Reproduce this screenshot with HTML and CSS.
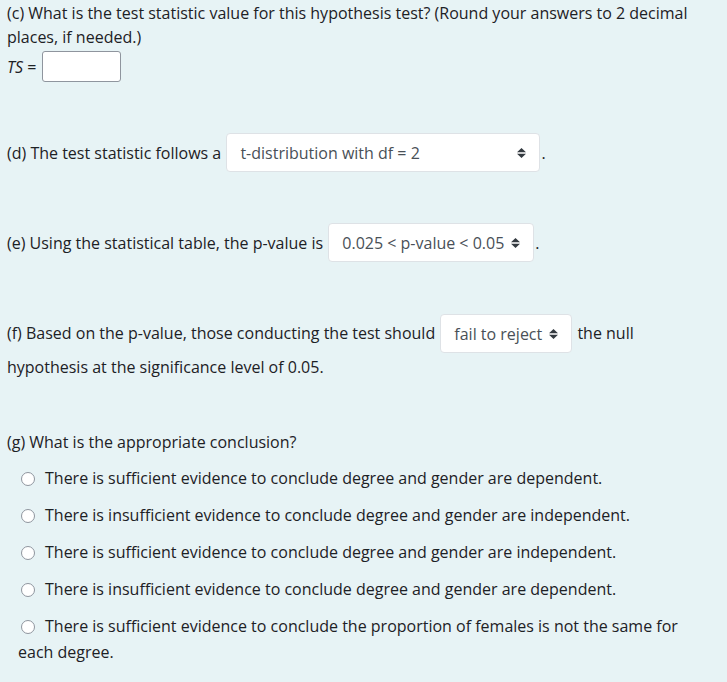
FILE: index.html
```html
<!DOCTYPE html>
<html>
<head>
<meta charset="utf-8">
<link rel="stylesheet" href="styles.css">
</head>
<body>
<div class="q">
  <p class="para">(c) What is the test statistic value for this hypothesis test? (Round your answers to 2 decimal places, if needed.)</p>
  <div class="ts-row"><span><i>TS</i> =</span><span class="input"></span></div>

  <div class="row row-d">(d) The test statistic follows a <span class="sel sel-wide"><span class="sel-text">t-distribution with df = 2</span><svg class="arrow" width="9" height="10" viewBox="0 0 9 10"><path d="M0 4.2L4.5 0L9 4.2Z M0 5.8L4.5 10L9 5.8Z" fill="#343a40"/></svg></span>.</div>

  <div class="row row-e">(e) Using the statistical table, the p-value is <span class="sel"><span class="sel-text">0.025 &lt; p-value &lt; 0.05</span><svg class="arrow" width="9" height="10" viewBox="0 0 9 10"><path d="M0 4.2L4.5 0L9 4.2Z M0 5.8L4.5 10L9 5.8Z" fill="#343a40"/></svg></span>.</div>

  <p class="para row-f">(f) Based on the p-value, those conducting the test should <span class="sel sel-f"><span class="sel-text">fail to reject</span><svg class="arrow" width="9" height="10" viewBox="0 0 9 10"><path d="M0 4.2L4.5 0L9 4.2Z M0 5.8L4.5 10L9 5.8Z" fill="#343a40"/></svg></span> the null hypothesis at the significance level of 0.05.</p>

  <p class="para row-g">(g) What is the appropriate conclusion?</p>
  <div class="options">
    <div class="opt"><span class="radio"></span>There is sufficient evidence to conclude degree and gender are dependent.</div>
    <div class="opt"><span class="radio"></span>There is insufficient evidence to conclude degree and gender are independent.</div>
    <div class="opt"><span class="radio"></span>There is sufficient evidence to conclude degree and gender are independent.</div>
    <div class="opt"><span class="radio"></span>There is insufficient evidence to conclude degree and gender are dependent.</div>
    <div class="opt"><span class="radio"></span>There is sufficient evidence to conclude the proportion of females is not the same for each degree.</div>
  </div>
</div>
</body>
</html>
```
FILE: styles.css
```css
html, body {
  margin: 0;
  background: #e7f3f5;
}
body {
  color: #1d2125;
  font-family: "Open Sans", "Noto Sans", sans-serif;
  font-size: 16px;
  line-height: 24px;
}
.q {
  width: 693px;
  padding: 1px 0 0 7px;
}
.para {
  margin: 0;
}
.ts-row {
  display: flex;
  align-items: center;
  gap: 6px;
  margin-top: 2px;
}
.input {
  display: block;
  width: 77px;
  height: 29px;
  border: 1px solid #8f959e;
  border-radius: 3px;
  background: #fff;
}
.row {
  display: flex;
  align-items: center;
  white-space: pre;
}
.row-d { margin-top: 51px; }
.row-e { margin-top: 51px; }
.sel {
  display: inline-flex;
  align-items: center;
  justify-content: space-between;
  box-sizing: border-box;
  height: 39px;
  padding: 0 13px 0 13px;
  margin: 0 1px 0 1px;
  border: 1px solid #dee2e6;
  border-radius: 4px;
  background: #fff;
  color: #495057;
  vertical-align: middle;
  white-space: nowrap;
}
.sel-wide { width: 314px; }
.sel-text { margin-right: 7px; }
.arrow { display: block; flex: none; }
.row-f {
  margin-top: 52px;
}
.sel-f {
  margin: 0 1px 2px 1px;
}
.row-g {
  margin-top: 51px;
}
.options {
  padding-left: 11px;
}
.opt {
  line-height: 26px;
  margin-top: 11px;
}
.radio {
  display: inline-block;
  box-sizing: border-box;
  width: 14px;
  height: 14px;
  margin: 0 10px 0 3px;
  border: 1px solid #8f959e;
  border-radius: 50%;
  background: #fff;
  vertical-align: -2px;
}
```
